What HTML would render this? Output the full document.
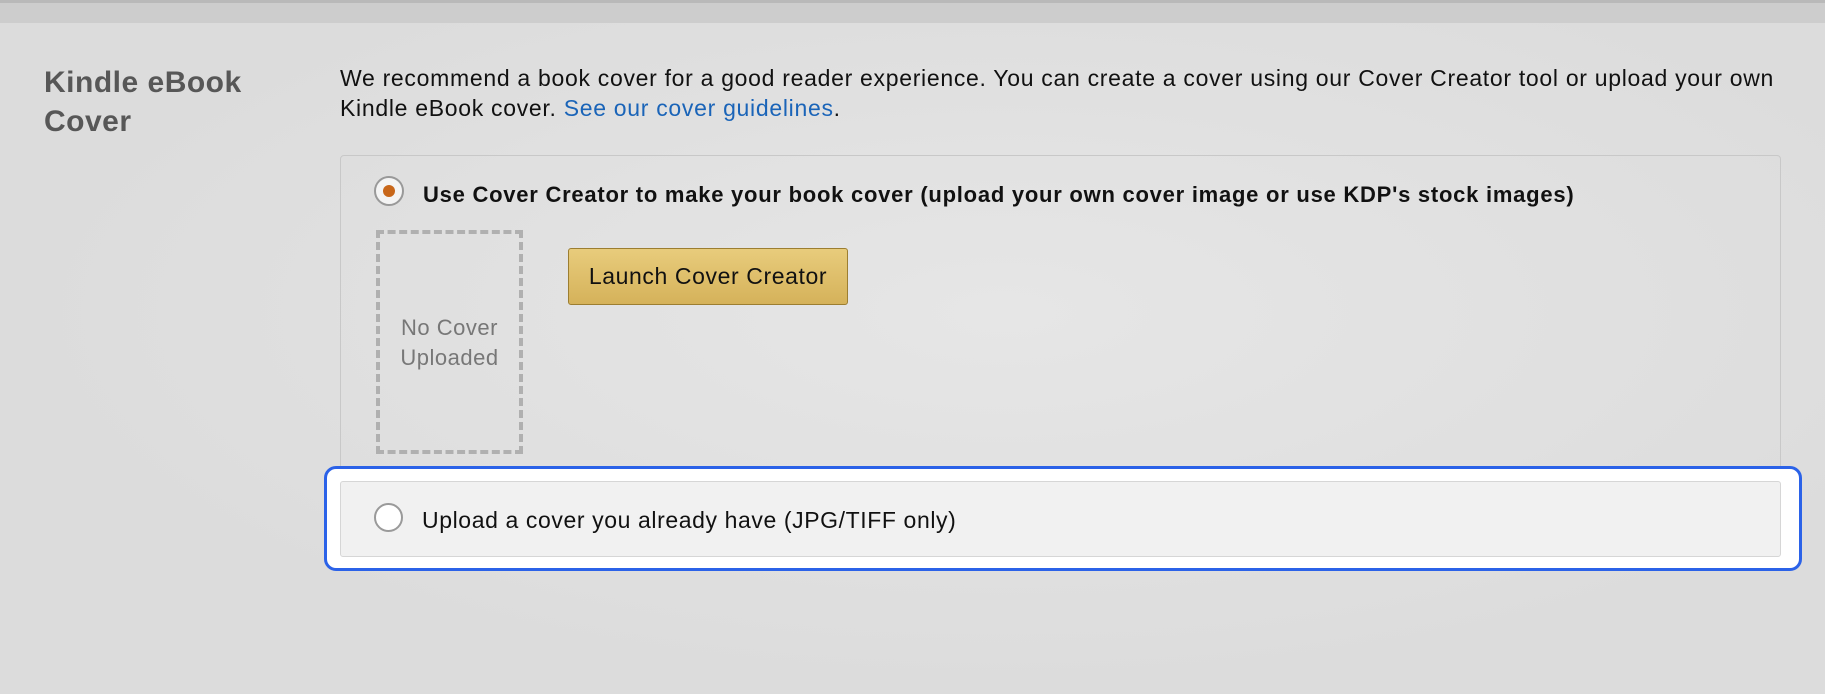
<!DOCTYPE html>
<html><head><meta charset="utf-8"><style>
body{margin:0;width:1825px;height:694px;overflow:hidden;background:radial-gradient(ellipse at 55% 45%,#e6e6e6,#dcdcdc 70%);font-family:"Liberation Sans",sans-serif;position:relative}
.band{position:absolute;left:0;top:0;width:1825px;height:23px;background:#cdcdcd;border-top:3px solid #b9b9b9;box-sizing:border-box}
.h{position:absolute;left:44px;top:63px;font-size:30px;letter-spacing:0.5px;font-weight:bold;color:#575757;line-height:39px}
.p{position:absolute;left:340px;top:63px;font-size:23px;letter-spacing:0.7px;color:#111;line-height:30px;width:1460px}
.p a{color:#1a64b8;text-decoration:none}
.box{position:absolute;left:340px;top:155px;width:1441px;height:400px;border:1px solid #c8c8c8;border-radius:4px;box-sizing:border-box}
.r{position:absolute;border-radius:50%;box-sizing:border-box}
.l1{position:absolute;left:423px;top:182px;font-size:22px;letter-spacing:0.75px;font-weight:bold;color:#111}
.dash{position:absolute;left:376px;top:230px;width:147px;height:224px;border:4px dashed #b0b0b0;box-sizing:border-box;color:#777;font-size:22px;letter-spacing:0.5px;text-align:center;line-height:30px;padding-top:79px}
.btn{position:absolute;left:568px;top:248px;width:280px;height:57px;box-sizing:border-box;border:1px solid #9c7e31;border-radius:3px;background:linear-gradient(#e8cc7c,#d5b25a);font-size:23px;letter-spacing:0.6px;color:#111;line-height:55px;text-align:center}
.blue{position:absolute;left:324px;top:466px;width:1478px;height:105px;border:3px solid #2b62e8;border-radius:12px;box-sizing:border-box;background:#fff}
.row{position:absolute;left:340px;top:481px;width:1441px;height:76px;background:#f1f1f1;border:1px solid #d6d6d6;border-radius:3px;box-sizing:border-box}
.l2{position:absolute;left:422px;top:507px;font-size:23px;letter-spacing:0.6px;color:#111}
</style></head><body>
<div class="band"></div>
<div class="h">Kindle eBook<br>Cover</div>
<div class="p">We recommend a book cover for a good reader experience. You can create a cover using our Cover Creator tool or upload your own Kindle eBook cover. <a>See our cover guidelines</a>.</div>
<div class="box"></div>
<div class="r" style="left:374px;top:176px;width:30px;height:30px;border:2px solid #999;background:#f4f4f4"></div>
<div class="r" style="left:383px;top:185px;width:12px;height:12px;background:#c8671a"></div>
<div class="l1">Use Cover Creator to make your book cover (upload your own cover image or use KDP's stock images)</div>
<div class="dash">No Cover<br>Uploaded</div>
<div class="btn">Launch Cover Creator</div>
<div class="blue"></div>
<div class="row"></div>
<div class="r" style="left:374px;top:503px;width:29px;height:29px;border:2px solid #9a9a9a;background:#fff"></div>
<div class="l2">Upload a cover you already have (JPG/TIFF only)</div>
</body></html>
